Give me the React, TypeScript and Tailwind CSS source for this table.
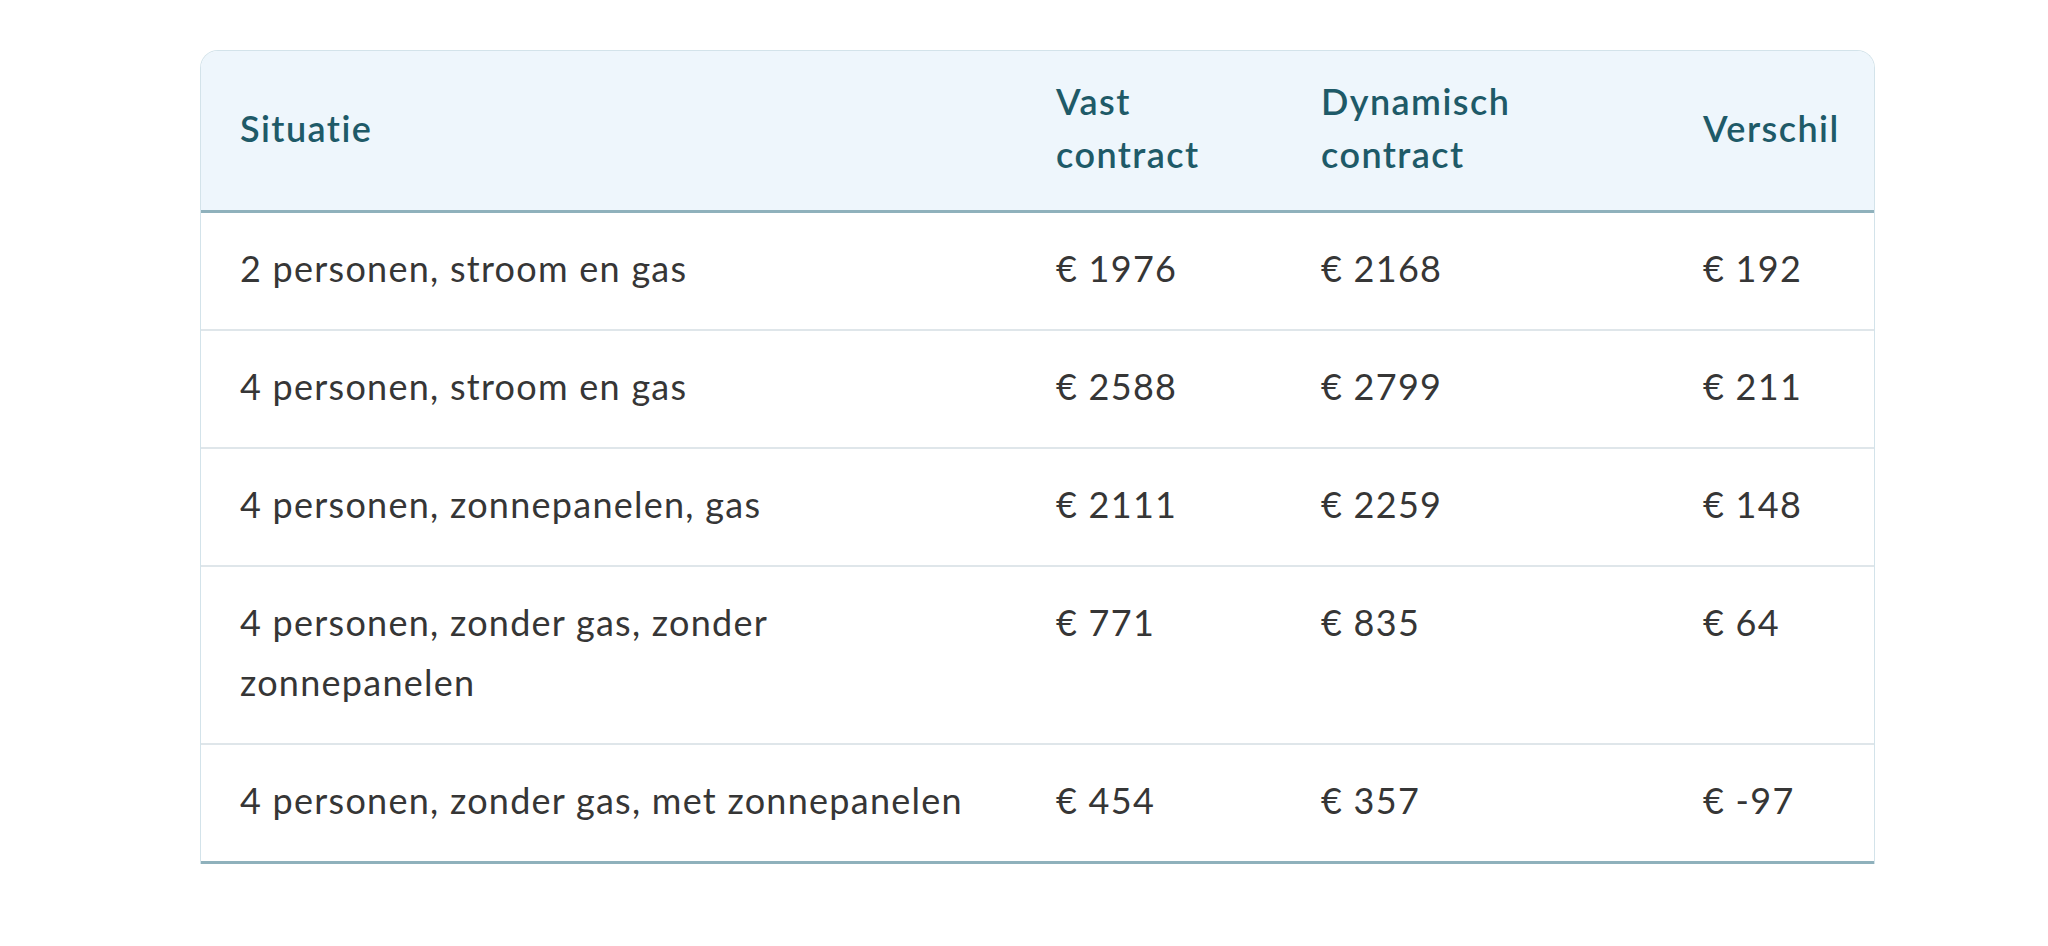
import React from 'react';

const rows = [
  { label: '2 personen, stroom en gas', vast: '€ 1976', dyn: '€ 2168', diff: '€ 192' },
  { label: '4 personen, stroom en gas', vast: '€ 2588', dyn: '€ 2799', diff: '€ 211' },
  { label: '4 personen, zonnepanelen, gas', vast: '€ 2111', dyn: '€ 2259', diff: '€ 148' },
  { label: '4 personen, zonder gas, zonder zonnepanelen', vast: '€ 771', dyn: '€ 835', diff: '€ 64' },
  { label: '4 personen, zonder gas, met zonnepanelen', vast: '€ 454', dyn: '€ 357', diff: '€ -97' },
];

const th = 'pl-[39px] pr-4 pb-[4px] align-middle text-[36px] leading-[53px] tracking-[0.04em] font-semibold text-[#1e5a68]';
const td = 'pt-[25px] pb-[31px] pl-[39px] align-top text-[36px] leading-[60px] tracking-[0.035em] text-[#363636]';

const App: React.FC = () => {
  return (
    <div className="min-h-screen bg-white pt-[50px] pl-[200px]" style={{ fontFamily: 'Lato, "Noto Sans", sans-serif' }}>
      <div className="w-[1675px] rounded-t-[18px] border border-[#d3e3ea] border-b-0 overflow-hidden">
        <table className="w-full border-collapse text-left">
          <colgroup>
            <col className="w-[816px]" />
            <col className="w-[265px]" />
            <col className="w-[382px]" />
            <col />
          </colgroup>
          <thead>
            <tr className="bg-[#eef6fc] border-b-[3px] border-[#8fb1bc]">
              <th className={`h-[160px] ${th}`}>Situatie</th>
              <th className={th}>Vast<br />contract</th>
              <th className={th}>Dynamisch<br />contract</th>
              <th className={th}>Verschil</th>
            </tr>
          </thead>
          <tbody>
            {rows.map((r, i) => (
              <tr
                key={i}
                className={i === rows.length - 1 ? 'border-b-[3px] border-[#8fb1bc]' : 'border-b-2 border-[#dfe6ea]'}
              >
                <td className={`${td} pr-[22px]`}>{r.label}</td>
                <td className={td}>{r.vast}</td>
                <td className={td}>{r.dyn}</td>
                <td className={td}>{r.diff}</td>
              </tr>
            ))}
          </tbody>
        </table>
      </div>
    </div>
  );
};

export default App;
